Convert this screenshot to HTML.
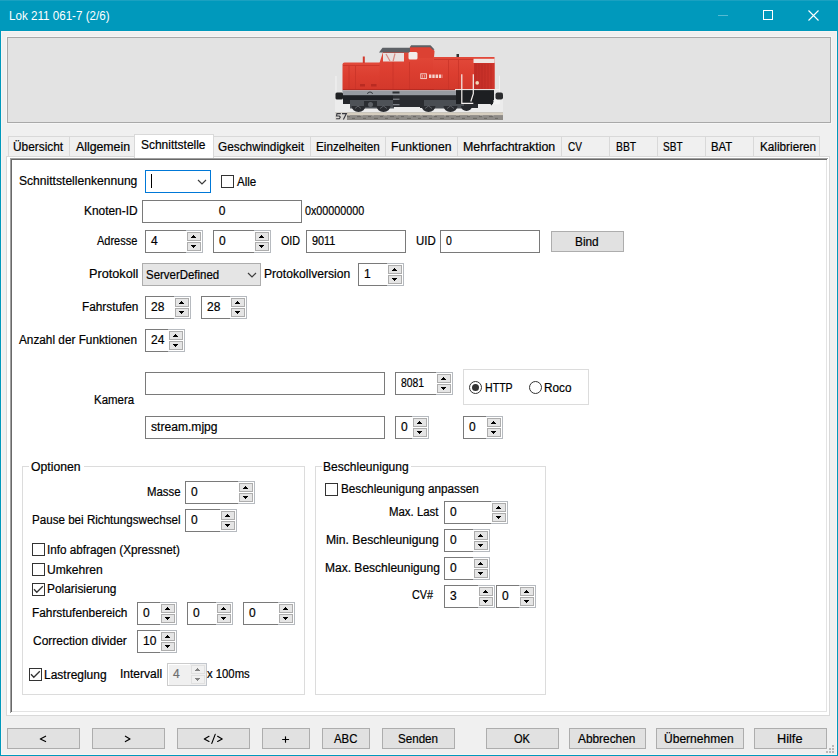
<!DOCTYPE html>
<html><head><meta charset="utf-8"><style>
html,body{margin:0;padding:0;width:838px;height:756px;overflow:hidden;background:#f0f0f0}
#w div,#w span,#w svg{position:absolute}
.t{-webkit-text-stroke:0.2px currentColor;font-family:"Liberation Sans", sans-serif;font-size:12px;line-height:14px;white-space:pre;color:#000}
</style></head><body><div id="w" style="position:absolute;left:0;top:0;width:838px;height:756px;background:#f0f0f0">

<div style="left:0px;top:0px;width:838px;height:31px;background:#0099bc"></div>
<div style="left:0px;top:0px;width:838px;height:1px;background:#1aa1c1"></div>
<div style="left:0px;top:31px;width:1px;height:725px;background:#0099bc"></div>
<div style="left:837px;top:31px;width:1px;height:725px;background:#0099bc"></div>
<div style="left:0px;top:755px;width:838px;height:1px;background:#0099bc"></div>
<div style="left:1px;top:31px;width:836px;height:1px;background:#f7f4f3"></div>
<div style="left:1px;top:31px;width:1px;height:724px;background:#f7f4f3"></div>
<div style="left:836px;top:31px;width:1px;height:724px;background:#f7f4f3"></div>
<div style="left:1px;top:754px;width:836px;height:1px;background:#f7f4f3"></div>
<span class="t" style="left:8.73px;top:9px;font-size:12px;color:#fff;transform:scaleX(0.9686);transform-origin:0 0;-webkit-text-stroke:0">Lok 211 061-7 (2/6)</span>
<div style="left:718px;top:15px;width:10px;height:1px;background:#55bad2"></div>
<div style="left:763px;top:10px;width:10px;height:10px;border:1px solid #fff;box-sizing:border-box"></div>
<svg style="left:808px;top:10px" width="12" height="12"><path d="M0.5 0.5 L10.5 10.5 M10.5 0.5 L0.5 10.5" stroke="#fff" stroke-width="1.1"/></svg>
<div style="left:6px;top:36px;width:826px;height:88px;background:#f6f6f6"></div>
<div style="left:7px;top:37px;width:824px;height:86px;background:#e3e3e3;border:1px solid #a9a9a9;box-sizing:border-box"></div>
<svg style="left:333px;top:42px" width="174" height="82" viewBox="333 42 174 82">
<defs>
<linearGradient id="rg" x1="0" y1="0" x2="0" y2="1"><stop offset="0" stop-color="#e2493a"/><stop offset="0.5" stop-color="#dc3e30"/><stop offset="1" stop-color="#d3382b"/></linearGradient>
<linearGradient id="ng" x1="0" y1="0" x2="1" y2="0"><stop offset="0" stop-color="#c22d26"/><stop offset="1" stop-color="#cf352c"/></linearGradient>
</defs>
<!-- light background under loco -->
<rect x="335" y="99" width="168" height="14" fill="#ececec"/>
<!-- track -->
<rect x="335" y="112.5" width="168" height="7.5" fill="#8e8b87"/>
<rect x="335" y="112.5" width="168" height="2.6" fill="#d6cebf"/>
<path d="M347 116.6h3M352 118.4h3M357 116.6h4M363 118.4h3M368 116.6h3M374 118.4h4M380 116.6h3M385 118.4h3M390 116.6h4M396 118.4h3M401 116.6h3M407 118.4h4M413 116.6h3M418 118.4h3M423 116.6h4M429 118.4h3M434 116.6h3M440 118.4h4M446 116.6h3M451 118.4h3M456 116.6h4M462 118.4h3M467 116.6h3M473 118.4h4M479 116.6h3M484 118.4h3M489 116.6h4M495 118.4h3" stroke="#6a6763" stroke-width="1"/>
<path d="M348 115.6h2M360 115.6h3M372 115.6h2M384 115.6h3M396 115.6h2M408 115.6h3M420 115.6h2M432 115.6h3M444 115.6h2M456 115.6h3M468 115.6h2M480 115.6h3M492 115.6h2" stroke="#aaa69f" stroke-width="1"/>
<rect x="335" y="112.5" width="12" height="7.5" fill="#d9d7d3"/>
<path d="M340.8 113.6h-3.8l-.5 2.4h2.8l1 1.1-1 1.6h-3.2M342 113.6h4.4l-3 5.8" stroke="#3a3a40" stroke-width="1.15" fill="none"/>
<!-- underframe base band -->
<rect x="343" y="95" width="151" height="5.5" fill="#1f2125"/>
<path d="M343 100 H351 V104 H343 Z" fill="#25272b"/>
<!-- left bogie -->
<path d="M350 100 H394 V108.5 H350 Z" fill="#4e5257"/>
<path d="M351.5 106 a7 6 0 0 0 14 0z" fill="#2a2c30"/><path d="M355 108.5l3-2.5 3 2.5" stroke="#6b6f74" stroke-width="0.8" fill="none"/>
<path d="M376.5 106 a7 6 0 0 0 14 0z" fill="#2a2c30"/><path d="M380 108.5l3.5-2.5 3.5 2.5" stroke="#6b6f74" stroke-width="0.8" fill="none"/>
<path d="M364 101 h13 v6 h-13z" fill="#2b2e32"/>
<circle cx="370.5" cy="104.5" r="2.5" fill="#5d6166"/>
<!-- middle: steps + tank -->
<path d="M393 95 H420 V107 H393 Z" fill="#2a2c30"/>
<rect x="393" y="98.6" width="6.5" height="1.3" fill="#7d8187"/>
<rect x="393" y="104" width="6.5" height="1.3" fill="#7d8187"/>
<!-- right bogie -->
<path d="M420 95 H482 V104 H478 V108 H420 Z" fill="#2a2c30"/>
<path d="M424 100 H464 V108.5 H424 Z" fill="#4a4e53"/>
<path d="M421.5 106 a7 6 0 0 0 14 0z" fill="#2a2c30"/><path d="M425 108.5l3.5-2.5 3.5 2.5" stroke="#6b6f74" stroke-width="0.8" fill="none"/>
<path d="M443.5 106 a7 6 0 0 0 14 0z" fill="#2a2c30"/><path d="M447 108.5l3.5-2.5 3.5 2.5" stroke="#6b6f74" stroke-width="0.8" fill="none"/>
<path d="M461 106 a5.5 5 0 0 0 11 0z" fill="#26282c"/>
<!-- front frame -->
<path d="M456 89.5 H494 V104 H456 Z" fill="#1d1f22"/>
<rect x="493" y="100" width="6" height="4.4" fill="#f3f3f3"/>
<path d="M491 98 q4 3 0 7" stroke="#1d1f22" stroke-width="1.2" fill="none"/>
<!-- gray frame -->
<rect x="342.5" y="90" width="113.5" height="5.2" fill="#979ba1"/>
<rect x="342.5" y="90" width="113.5" height="1" fill="#b3b6ba"/>
<rect x="392.5" y="91.5" width="7" height="2" fill="#2d3034"/>
<path d="M367.5 94 a2.5 2 0 0 1 5 0" stroke="#3a3d42" stroke-width="1" fill="none"/>
<!-- buffers -->
<path d="M336 76v16" stroke="#f4f4f4" stroke-width="1"/>
<path d="M499.4 75.7v28.3" stroke="#f4f4f4" stroke-width="0.9"/>
<rect x="335.5" y="92.5" width="7.5" height="7" rx="1.5" fill="#1f2022"/>
<rect x="495.5" y="92.5" width="7.5" height="7" rx="2" fill="#2a2b2d"/>
<!-- red body: short hood -->
<path d="M342.5 64.5 Q342.5 62.5 344.5 62.5 H382 V90 H342.5 Z" fill="url(#rg)"/>
<path d="M349 66v23M355.5 66v23M343 65.5h38" stroke="#c93328" stroke-width="0.8"/>
<rect x="360" y="84" width="5" height="2.5" fill="#b92b22"/>
<rect x="371" y="84" width="5.5" height="2.5" fill="#b92b22"/>
<rect x="362.8" y="56.5" width="2" height="6.5" fill="#d2392d"/>
<!-- cab -->
<path d="M379.5 63 L383 52 H434 V90 H379.5 Z" fill="url(#rg)"/>
<path d="M409 53 L410 46.5 H431 L434.5 51 L434 58 H409 Z" fill="#dc4133"/>
<path d="M379 52.5 L382.5 47.8 H410 V52.5 Z" fill="#5d6166"/>
<path d="M410 47.5 L411 45.2 H430.5 L434.5 49.5 L433 50 L430 47.3 H411.5 Z" fill="#5d6166"/>
<rect x="383" y="53" width="21" height="8.5" fill="#e9e1e0"/>
<path d="M386 54l4 7M395 53.5l-2 8" stroke="#d98a82" stroke-width="1.2"/>
<rect x="408.5" y="52" width="9" height="7.5" rx="1.5" fill="#f3ecea"/>
<path d="M409.5 62v28M393 62v28" stroke="#c93328" stroke-width="0.8"/>
<!-- long hood -->
<rect x="433" y="57" width="61.5" height="32.5" fill="url(#rg)"/>
<path d="M448.5 60v29M458.5 60v29M434 59.5h40" stroke="#c93328" stroke-width="0.8"/>
<rect x="474" y="62.5" width="20.5" height="27" fill="url(#ng)"/>
<path d="M476 64v25M479 64v25M482 64v25M485 64v25M488 64v25M491 64v25" stroke="#b52a23" stroke-width="0.6"/>
<rect x="473.5" y="58.8" width="21" height="4.2" fill="#efe6e3"/>
<rect x="456.5" y="54" width="2.5" height="3" fill="#333"/>
<circle cx="477.2" cy="82.9" r="1.8" fill="#f2d9b8"/>
<path d="M343 89.6h113" stroke="#b42a22" stroke-width="1"/>
<!-- DB Cargo -->
<rect x="420.8" y="73.8" width="5.6" height="4.8" fill="none" stroke="#f5dcd6" stroke-width="0.9"/>
<path d="M422.6 74.8v3M424.6 74.8v3" stroke="#f5dcd6" stroke-width="0.6"/>
<path d="M429 76.2h13.5" stroke="#f4d3cc" stroke-width="3.6" stroke-dasharray="2.4 0.9"/>
<path d="M455 89.6 H500" stroke="#f2f0ee" stroke-width="1"/>
<!-- railings -->
<path d="M461.8 74.3 V103.3 H473.3 M473.3 74.3 V93.6 L470.8 101.5" stroke="#f4f0ee" stroke-width="1.2" fill="none"/>
</svg>

<div style="left:6px;top:156px;width:824px;height:560px;background:#fff;border:1px solid #d9d9d9;box-sizing:border-box"></div>
<div style="left:8px;top:136px;width:62px;height:21px;background:#f0f0f0;border:1px solid #d9d9d9;box-sizing:border-box"></div>
<div style="left:69px;top:136px;width:66px;height:21px;background:#f0f0f0;border:1px solid #d9d9d9;box-sizing:border-box"></div>
<div style="left:213px;top:136px;width:98px;height:21px;background:#f0f0f0;border:1px solid #d9d9d9;box-sizing:border-box"></div>
<div style="left:310px;top:136px;width:76px;height:21px;background:#f0f0f0;border:1px solid #d9d9d9;box-sizing:border-box"></div>
<div style="left:385px;top:136px;width:73px;height:21px;background:#f0f0f0;border:1px solid #d9d9d9;box-sizing:border-box"></div>
<div style="left:457px;top:136px;width:105px;height:21px;background:#f0f0f0;border:1px solid #d9d9d9;box-sizing:border-box"></div>
<div style="left:561px;top:136px;width:49px;height:21px;background:#f0f0f0;border:1px solid #d9d9d9;box-sizing:border-box"></div>
<div style="left:609px;top:136px;width:49px;height:21px;background:#f0f0f0;border:1px solid #d9d9d9;box-sizing:border-box"></div>
<div style="left:657px;top:136px;width:49px;height:21px;background:#f0f0f0;border:1px solid #d9d9d9;box-sizing:border-box"></div>
<div style="left:705px;top:136px;width:49px;height:21px;background:#f0f0f0;border:1px solid #d9d9d9;box-sizing:border-box"></div>
<div style="left:753px;top:136px;width:67px;height:21px;background:#f0f0f0;border:1px solid #d9d9d9;box-sizing:border-box"></div>
<span class="t" style="left:13.41px;top:140px;font-size:12px;color:#000;transform:scaleX(0.9880);transform-origin:0 0;">Übersicht</span>
<span class="t" style="left:76.10px;top:140px;font-size:12px;color:#000;transform:scaleX(1.0250);transform-origin:0 0;">Allgemein</span>
<span class="t" style="left:218.40px;top:140px;font-size:12px;color:#000;transform:scaleX(0.9841);transform-origin:0 0;">Geschwindigkeit</span>
<span class="t" style="left:316.32px;top:140px;font-size:12px;color:#000;transform:scaleX(0.9766);transform-origin:0 0;">Einzelheiten</span>
<span class="t" style="left:391.28px;top:140px;font-size:12px;color:#000;transform:scaleX(1.0190);transform-origin:0 0;">Funktionen</span>
<span class="t" style="left:463.47px;top:140px;font-size:12px;color:#000;transform:scaleX(1.0318);transform-origin:0 0;">Mehrfachtraktion</span>
<span class="t" style="left:568.40px;top:140px;font-size:12px;color:#000;transform:scaleX(0.8353);transform-origin:0 0;">CV</span>
<span class="t" style="left:615.64px;top:140px;font-size:12px;color:#000;transform:scaleX(0.8636);transform-origin:0 0;">BBT</span>
<span class="t" style="left:663.06px;top:140px;font-size:12px;color:#000;transform:scaleX(0.8409);transform-origin:0 0;">SBT</span>
<span class="t" style="left:711.25px;top:140px;font-size:12px;color:#000;transform:scaleX(0.9476);transform-origin:0 0;">BAT</span>
<span class="t" style="left:759.52px;top:140px;font-size:12px;color:#000;transform:scaleX(0.9786);transform-origin:0 0;">Kalibrieren</span>
<div style="left:134px;top:134px;width:80px;height:24px;background:#fff;border:1px solid #d9d9d9;border-bottom:none;box-sizing:border-box"></div>
<span class="t" style="left:140.70px;top:138px;font-size:12px;color:#000;transform:scaleX(0.9969);transform-origin:0 0;">Schnittstelle</span>
<div style="left:10px;top:158px;width:818px;height:555px;background:#fff"></div>
<div style="left:10px;top:158px;width:818px;height:1px;background:#a0a0a0"></div>
<div style="left:10px;top:158px;width:1px;height:555px;background:#a0a0a0"></div>
<div style="left:11px;top:159px;width:816px;height:1px;background:#696969"></div>
<div style="left:11px;top:159px;width:1px;height:553px;background:#696969"></div>
<div style="left:12px;top:711px;width:815px;height:1px;background:#e3e3e3"></div>
<div style="left:826px;top:160px;width:1px;height:552px;background:#e3e3e3"></div>
<span class="t" style="left:19.39px;top:174px;font-size:12px;color:#000;transform:scaleX(1.0078);transform-origin:0 0;">Schnittstellenkennung</span>
<div style="left:145px;top:170px;width:66px;height:23px;background:#fff;border:1px solid #0078d7;box-sizing:border-box"></div>
<div style="left:151px;top:174px;width:1px;height:14px;background:#000"></div>
<svg style="left:197.3px;top:178.8px" width="11" height="7"><polyline points="1,1 5,5 9,1" fill="none" stroke="#3c3c3c" stroke-width="1.15"/></svg>
<div style="left:221px;top:175px;width:13px;height:13px;background:#fff;border:1px solid #333;box-sizing:border-box"></div>
<span class="t" style="left:237.40px;top:175px;font-size:12px;color:#000;transform:scaleX(0.9650);transform-origin:0 0;">Alle</span>
<span class="t" style="left:83.71px;top:204px;font-size:12px;color:#000;transform:scaleX(0.9925);transform-origin:0 0;">Knoten-ID</span>
<div style="left:142px;top:200px;width:160px;height:23px;background:#fff;border:1px solid #7a7a7a;box-sizing:border-box"></div>
<span class="t" style="left:142px;top:204px;width:160px;font-size:12px;color:#000;text-align:center;">0</span>
<span class="t" style="left:304.60px;top:204px;font-size:12px;color:#000;transform:scaleX(0.8955);transform-origin:0 0;">0x00000000</span>
<span class="t" style="left:97.30px;top:234px;font-size:12px;color:#000;transform:scaleX(0.9159);transform-origin:0 0;">Adresse</span>
<div style="left:145px;top:230px;width:58px;height:23px;background:#fff"></div>
<div style="left:145px;top:230px;width:41px;height:23px;border:1px solid #7a7a7a;border-right:none;box-sizing:border-box"></div>
<div style="left:186px;top:230px;width:17px;height:23px;border:1px solid #b6babf;border-left:none;box-sizing:border-box;background:#fff"></div>
<div style="left:187px;top:232px;width:14px;height:9px;border:1px solid #adadad;box-sizing:border-box;background:#e5e5e5"></div>
<div style="left:187px;top:242px;width:14px;height:9px;border:1px solid #adadad;box-sizing:border-box;background:#e5e5e5"></div>
<div style="left:193px;top:235px;width:1px;height:1px;background:#000"></div>
<div style="left:192px;top:236px;width:3px;height:1px;background:#000"></div>
<div style="left:191px;top:237px;width:5px;height:1px;background:#000"></div>
<div style="left:191px;top:245px;width:5px;height:1px;background:#000"></div>
<div style="left:192px;top:246px;width:3px;height:1px;background:#000"></div>
<div style="left:193px;top:247px;width:1px;height:1px;background:#000"></div>
<span class="t" style="left:151px;top:234px;font-size:12px;color:#000;">4</span>
<div style="left:213px;top:230px;width:58px;height:23px;background:#fff"></div>
<div style="left:213px;top:230px;width:41px;height:23px;border:1px solid #7a7a7a;border-right:none;box-sizing:border-box"></div>
<div style="left:254px;top:230px;width:17px;height:23px;border:1px solid #b6babf;border-left:none;box-sizing:border-box;background:#fff"></div>
<div style="left:255px;top:232px;width:14px;height:9px;border:1px solid #adadad;box-sizing:border-box;background:#e5e5e5"></div>
<div style="left:255px;top:242px;width:14px;height:9px;border:1px solid #adadad;box-sizing:border-box;background:#e5e5e5"></div>
<div style="left:261px;top:235px;width:1px;height:1px;background:#000"></div>
<div style="left:260px;top:236px;width:3px;height:1px;background:#000"></div>
<div style="left:259px;top:237px;width:5px;height:1px;background:#000"></div>
<div style="left:259px;top:245px;width:5px;height:1px;background:#000"></div>
<div style="left:260px;top:246px;width:3px;height:1px;background:#000"></div>
<div style="left:261px;top:247px;width:1px;height:1px;background:#000"></div>
<span class="t" style="left:219px;top:234px;font-size:12px;color:#000;">0</span>
<span class="t" style="left:281.40px;top:234px;font-size:12px;color:#000;transform:scaleX(0.8952);transform-origin:0 0;">OID</span>
<div style="left:306px;top:230px;width:100px;height:23px;background:#fff;border:1px solid #7a7a7a;box-sizing:border-box"></div>
<span class="t" style="left:311.80px;top:234px;font-size:12px;color:#000;transform:scaleX(0.9038);transform-origin:0 0;">9011</span>
<span class="t" style="left:415.55px;top:234px;font-size:12px;color:#000;transform:scaleX(0.9526);transform-origin:0 0;">UID</span>
<div style="left:440px;top:230px;width:100px;height:23px;background:#fff;border:1px solid #7a7a7a;box-sizing:border-box"></div>
<span class="t" style="left:446.00px;top:234px;font-size:12px;color:#000;transform:scaleX(0.8714);transform-origin:0 0;">0</span>
<div style="left:551px;top:231px;width:73px;height:21px;background:#e1e1e1;border:1px solid #adadad;box-sizing:border-box"></div>
<span class="t" style="left:574.61px;top:235px;font-size:12px;color:#000;transform:scaleX(0.9870);transform-origin:0 0;">Bind</span>
<span class="t" style="left:89.14px;top:267px;font-size:12px;color:#000;transform:scaleX(1.0578);transform-origin:0 0;">Protokoll</span>
<div style="left:142px;top:263px;width:119px;height:23px;background:#e5e5e5;border:1px solid #adadad;box-sizing:border-box"></div>
<span class="t" style="left:145.85px;top:268px;font-size:12px;color:#000;transform:scaleX(0.9533);transform-origin:0 0;">ServerDefined</span>
<svg style="left:247px;top:271.5px" width="11" height="7"><polyline points="1,1 5,5 9,1" fill="none" stroke="#3c3c3c" stroke-width="1.15"/></svg>
<span class="t" style="left:264.29px;top:267px;font-size:12px;color:#000;transform:scaleX(1.0095);transform-origin:0 0;">Protokollversion</span>
<div style="left:358px;top:263px;width:46px;height:23px;background:#fff"></div>
<div style="left:358px;top:263px;width:29px;height:23px;border:1px solid #7a7a7a;border-right:none;box-sizing:border-box"></div>
<div style="left:387px;top:263px;width:17px;height:23px;border:1px solid #b6babf;border-left:none;box-sizing:border-box;background:#fff"></div>
<div style="left:388px;top:265px;width:14px;height:9px;border:1px solid #adadad;box-sizing:border-box;background:#e5e5e5"></div>
<div style="left:388px;top:275px;width:14px;height:9px;border:1px solid #adadad;box-sizing:border-box;background:#e5e5e5"></div>
<div style="left:394px;top:268px;width:1px;height:1px;background:#000"></div>
<div style="left:393px;top:269px;width:3px;height:1px;background:#000"></div>
<div style="left:392px;top:270px;width:5px;height:1px;background:#000"></div>
<div style="left:392px;top:278px;width:5px;height:1px;background:#000"></div>
<div style="left:393px;top:279px;width:3px;height:1px;background:#000"></div>
<div style="left:394px;top:280px;width:1px;height:1px;background:#000"></div>
<span class="t" style="left:364px;top:267px;font-size:12px;color:#000;">1</span>
<span class="t" style="left:81.52px;top:300px;font-size:12px;color:#000;transform:scaleX(0.9839);transform-origin:0 0;">Fahrstufen</span>
<div style="left:145px;top:296px;width:46px;height:23px;background:#fff"></div>
<div style="left:145px;top:296px;width:29px;height:23px;border:1px solid #7a7a7a;border-right:none;box-sizing:border-box"></div>
<div style="left:174px;top:296px;width:17px;height:23px;border:1px solid #b6babf;border-left:none;box-sizing:border-box;background:#fff"></div>
<div style="left:175px;top:298px;width:14px;height:9px;border:1px solid #adadad;box-sizing:border-box;background:#e5e5e5"></div>
<div style="left:175px;top:308px;width:14px;height:9px;border:1px solid #adadad;box-sizing:border-box;background:#e5e5e5"></div>
<div style="left:181px;top:301px;width:1px;height:1px;background:#000"></div>
<div style="left:180px;top:302px;width:3px;height:1px;background:#000"></div>
<div style="left:179px;top:303px;width:5px;height:1px;background:#000"></div>
<div style="left:179px;top:311px;width:5px;height:1px;background:#000"></div>
<div style="left:180px;top:312px;width:3px;height:1px;background:#000"></div>
<div style="left:181px;top:313px;width:1px;height:1px;background:#000"></div>
<span class="t" style="left:151px;top:300px;font-size:12px;color:#000;">28</span>
<div style="left:201px;top:296px;width:46px;height:23px;background:#fff"></div>
<div style="left:201px;top:296px;width:29px;height:23px;border:1px solid #7a7a7a;border-right:none;box-sizing:border-box"></div>
<div style="left:230px;top:296px;width:17px;height:23px;border:1px solid #b6babf;border-left:none;box-sizing:border-box;background:#fff"></div>
<div style="left:231px;top:298px;width:14px;height:9px;border:1px solid #adadad;box-sizing:border-box;background:#e5e5e5"></div>
<div style="left:231px;top:308px;width:14px;height:9px;border:1px solid #adadad;box-sizing:border-box;background:#e5e5e5"></div>
<div style="left:237px;top:301px;width:1px;height:1px;background:#000"></div>
<div style="left:236px;top:302px;width:3px;height:1px;background:#000"></div>
<div style="left:235px;top:303px;width:5px;height:1px;background:#000"></div>
<div style="left:235px;top:311px;width:5px;height:1px;background:#000"></div>
<div style="left:236px;top:312px;width:3px;height:1px;background:#000"></div>
<div style="left:237px;top:313px;width:1px;height:1px;background:#000"></div>
<span class="t" style="left:207px;top:300px;font-size:12px;color:#000;">28</span>
<span class="t" style="left:19.10px;top:333px;font-size:12px;color:#000;transform:scaleX(0.9825);transform-origin:0 0;">Anzahl der Funktionen</span>
<div style="left:145px;top:329px;width:40px;height:23px;background:#fff"></div>
<div style="left:145px;top:329px;width:23px;height:23px;border:1px solid #7a7a7a;border-right:none;box-sizing:border-box"></div>
<div style="left:168px;top:329px;width:17px;height:23px;border:1px solid #b6babf;border-left:none;box-sizing:border-box;background:#fff"></div>
<div style="left:169px;top:331px;width:14px;height:9px;border:1px solid #adadad;box-sizing:border-box;background:#e5e5e5"></div>
<div style="left:169px;top:341px;width:14px;height:9px;border:1px solid #adadad;box-sizing:border-box;background:#e5e5e5"></div>
<div style="left:175px;top:334px;width:1px;height:1px;background:#000"></div>
<div style="left:174px;top:335px;width:3px;height:1px;background:#000"></div>
<div style="left:173px;top:336px;width:5px;height:1px;background:#000"></div>
<div style="left:173px;top:344px;width:5px;height:1px;background:#000"></div>
<div style="left:174px;top:345px;width:3px;height:1px;background:#000"></div>
<div style="left:175px;top:346px;width:1px;height:1px;background:#000"></div>
<span class="t" style="left:151px;top:333px;font-size:12px;color:#000;">24</span>
<span class="t" style="left:94.35px;top:393px;font-size:12px;color:#000;transform:scaleX(0.9537);transform-origin:0 0;">Kamera</span>
<div style="left:145px;top:372px;width:240px;height:23px;background:#fff;border:1px solid #7a7a7a;box-sizing:border-box"></div>
<div style="left:395px;top:372px;width:58px;height:23px;background:#fff"></div>
<div style="left:395px;top:372px;width:41px;height:23px;border:1px solid #7a7a7a;border-right:none;box-sizing:border-box"></div>
<div style="left:436px;top:372px;width:17px;height:23px;border:1px solid #b6babf;border-left:none;box-sizing:border-box;background:#fff"></div>
<div style="left:437px;top:374px;width:14px;height:9px;border:1px solid #adadad;box-sizing:border-box;background:#e5e5e5"></div>
<div style="left:437px;top:384px;width:14px;height:9px;border:1px solid #adadad;box-sizing:border-box;background:#e5e5e5"></div>
<div style="left:443px;top:377px;width:1px;height:1px;background:#000"></div>
<div style="left:442px;top:378px;width:3px;height:1px;background:#000"></div>
<div style="left:441px;top:379px;width:5px;height:1px;background:#000"></div>
<div style="left:441px;top:387px;width:5px;height:1px;background:#000"></div>
<div style="left:442px;top:388px;width:3px;height:1px;background:#000"></div>
<div style="left:443px;top:389px;width:1px;height:1px;background:#000"></div>
<span class="t" style="left:401.00px;top:376px;font-size:12px;color:#000;transform:scaleX(0.8630);transform-origin:0 0;">8081</span>
<div style="left:463px;top:369px;width:126px;height:36px;border:1px solid #dcdcdc;box-sizing:border-box"></div>
<svg style="left:468px;top:380px" width="15" height="15"><circle cx="7.5" cy="7.5" r="6" fill="#fff" stroke="#333" stroke-width="1"/><circle cx="7.5" cy="7.5" r="3.5" fill="#333"/></svg>
<span class="t" style="left:484.72px;top:381px;font-size:12px;color:#000;transform:scaleX(0.8833);transform-origin:0 0;">HTTP</span>
<svg style="left:528px;top:380px" width="15" height="15"><circle cx="7.5" cy="7.5" r="6" fill="#fff" stroke="#333" stroke-width="1"/></svg>
<span class="t" style="left:544.32px;top:381px;font-size:12px;color:#000;transform:scaleX(0.9815);transform-origin:0 0;">Roco</span>
<div style="left:145px;top:416px;width:240px;height:23px;background:#fff;border:1px solid #7a7a7a;box-sizing:border-box"></div>
<span class="t" style="left:151.00px;top:420px;font-size:12px;color:#000;transform:scaleX(1.0076);transform-origin:0 0;">stream.mjpg</span>
<div style="left:395px;top:416px;width:34px;height:23px;background:#fff"></div>
<div style="left:395px;top:416px;width:17px;height:23px;border:1px solid #7a7a7a;border-right:none;box-sizing:border-box"></div>
<div style="left:412px;top:416px;width:17px;height:23px;border:1px solid #b6babf;border-left:none;box-sizing:border-box;background:#fff"></div>
<div style="left:413px;top:418px;width:14px;height:9px;border:1px solid #adadad;box-sizing:border-box;background:#e5e5e5"></div>
<div style="left:413px;top:428px;width:14px;height:9px;border:1px solid #adadad;box-sizing:border-box;background:#e5e5e5"></div>
<div style="left:419px;top:421px;width:1px;height:1px;background:#000"></div>
<div style="left:418px;top:422px;width:3px;height:1px;background:#000"></div>
<div style="left:417px;top:423px;width:5px;height:1px;background:#000"></div>
<div style="left:417px;top:431px;width:5px;height:1px;background:#000"></div>
<div style="left:418px;top:432px;width:3px;height:1px;background:#000"></div>
<div style="left:419px;top:433px;width:1px;height:1px;background:#000"></div>
<span class="t" style="left:401px;top:420px;font-size:12px;color:#000;">0</span>
<div style="left:463px;top:416px;width:40px;height:23px;background:#fff"></div>
<div style="left:463px;top:416px;width:23px;height:23px;border:1px solid #7a7a7a;border-right:none;box-sizing:border-box"></div>
<div style="left:486px;top:416px;width:17px;height:23px;border:1px solid #b6babf;border-left:none;box-sizing:border-box;background:#fff"></div>
<div style="left:487px;top:418px;width:14px;height:9px;border:1px solid #adadad;box-sizing:border-box;background:#e5e5e5"></div>
<div style="left:487px;top:428px;width:14px;height:9px;border:1px solid #adadad;box-sizing:border-box;background:#e5e5e5"></div>
<div style="left:493px;top:421px;width:1px;height:1px;background:#000"></div>
<div style="left:492px;top:422px;width:3px;height:1px;background:#000"></div>
<div style="left:491px;top:423px;width:5px;height:1px;background:#000"></div>
<div style="left:491px;top:431px;width:5px;height:1px;background:#000"></div>
<div style="left:492px;top:432px;width:3px;height:1px;background:#000"></div>
<div style="left:493px;top:433px;width:1px;height:1px;background:#000"></div>
<span class="t" style="left:469px;top:420px;font-size:12px;color:#000;">0</span>
<div style="left:22px;top:466px;width:283px;height:229px;border:1px solid #dcdcdc;box-sizing:border-box"></div>
<div style="left:29px;top:460px;width:55px;height:13px;background:#fff"></div>
<span class="t" style="left:31.40px;top:460px;font-size:12px;color:#000;transform:scaleX(1.0167);transform-origin:0 0;">Optionen</span>
<span class="t" style="left:146.55px;top:485px;font-size:12px;color:#000;transform:scaleX(0.9500);transform-origin:0 0;">Masse</span>
<div style="left:185px;top:481px;width:70px;height:23px;background:#fff"></div>
<div style="left:185px;top:481px;width:53px;height:23px;border:1px solid #7a7a7a;border-right:none;box-sizing:border-box"></div>
<div style="left:238px;top:481px;width:17px;height:23px;border:1px solid #b6babf;border-left:none;box-sizing:border-box;background:#fff"></div>
<div style="left:239px;top:483px;width:14px;height:9px;border:1px solid #adadad;box-sizing:border-box;background:#e5e5e5"></div>
<div style="left:239px;top:493px;width:14px;height:9px;border:1px solid #adadad;box-sizing:border-box;background:#e5e5e5"></div>
<div style="left:245px;top:486px;width:1px;height:1px;background:#000"></div>
<div style="left:244px;top:487px;width:3px;height:1px;background:#000"></div>
<div style="left:243px;top:488px;width:5px;height:1px;background:#000"></div>
<div style="left:243px;top:496px;width:5px;height:1px;background:#000"></div>
<div style="left:244px;top:497px;width:3px;height:1px;background:#000"></div>
<div style="left:245px;top:498px;width:1px;height:1px;background:#000"></div>
<span class="t" style="left:191px;top:485px;font-size:12px;color:#000;">0</span>
<span class="t" style="left:31.73px;top:513px;font-size:12px;color:#000;transform:scaleX(0.9678);transform-origin:0 0;">Pause bei Richtungswechsel</span>
<div style="left:185px;top:509px;width:52px;height:23px;background:#fff"></div>
<div style="left:185px;top:509px;width:35px;height:23px;border:1px solid #7a7a7a;border-right:none;box-sizing:border-box"></div>
<div style="left:220px;top:509px;width:17px;height:23px;border:1px solid #b6babf;border-left:none;box-sizing:border-box;background:#fff"></div>
<div style="left:221px;top:511px;width:14px;height:9px;border:1px solid #adadad;box-sizing:border-box;background:#e5e5e5"></div>
<div style="left:221px;top:521px;width:14px;height:9px;border:1px solid #adadad;box-sizing:border-box;background:#e5e5e5"></div>
<div style="left:227px;top:514px;width:1px;height:1px;background:#000"></div>
<div style="left:226px;top:515px;width:3px;height:1px;background:#000"></div>
<div style="left:225px;top:516px;width:5px;height:1px;background:#000"></div>
<div style="left:225px;top:524px;width:5px;height:1px;background:#000"></div>
<div style="left:226px;top:525px;width:3px;height:1px;background:#000"></div>
<div style="left:227px;top:526px;width:1px;height:1px;background:#000"></div>
<span class="t" style="left:191px;top:513px;font-size:12px;color:#000;">0</span>
<div style="left:32px;top:543px;width:13px;height:13px;background:#fff;border:1px solid #333;box-sizing:border-box"></div>
<span class="t" style="left:47.32px;top:543px;font-size:12px;color:#000;transform:scaleX(0.9770);transform-origin:0 0;">Info abfragen (Xpressnet)</span>
<div style="left:32px;top:563px;width:13px;height:13px;background:#fff;border:1px solid #333;box-sizing:border-box"></div>
<span class="t" style="left:47.29px;top:563px;font-size:12px;color:#000;transform:scaleX(1.0074);transform-origin:0 0;">Umkehren</span>
<div style="left:32px;top:583px;width:13px;height:13px;background:#fff;border:1px solid #333;box-sizing:border-box"></div>
<svg style="left:32px;top:583px" width="13" height="13"><polyline points="2,6.2 4.8,9.3 10.8,3.3" fill="none" stroke="#333" stroke-width="1.3"/></svg>
<span class="t" style="left:47.31px;top:582px;font-size:12px;color:#000;transform:scaleX(0.9913);transform-origin:0 0;">Polarisierung</span>
<span class="t" style="left:31.61px;top:606px;font-size:12px;color:#000;transform:scaleX(0.9863);transform-origin:0 0;">Fahrstufenbereich</span>
<div style="left:137px;top:602px;width:40px;height:23px;background:#fff"></div>
<div style="left:137px;top:602px;width:23px;height:23px;border:1px solid #7a7a7a;border-right:none;box-sizing:border-box"></div>
<div style="left:160px;top:602px;width:17px;height:23px;border:1px solid #b6babf;border-left:none;box-sizing:border-box;background:#fff"></div>
<div style="left:161px;top:604px;width:14px;height:9px;border:1px solid #adadad;box-sizing:border-box;background:#e5e5e5"></div>
<div style="left:161px;top:614px;width:14px;height:9px;border:1px solid #adadad;box-sizing:border-box;background:#e5e5e5"></div>
<div style="left:167px;top:607px;width:1px;height:1px;background:#000"></div>
<div style="left:166px;top:608px;width:3px;height:1px;background:#000"></div>
<div style="left:165px;top:609px;width:5px;height:1px;background:#000"></div>
<div style="left:165px;top:617px;width:5px;height:1px;background:#000"></div>
<div style="left:166px;top:618px;width:3px;height:1px;background:#000"></div>
<div style="left:167px;top:619px;width:1px;height:1px;background:#000"></div>
<span class="t" style="left:143px;top:606px;font-size:12px;color:#000;">0</span>
<div style="left:187px;top:602px;width:46px;height:23px;background:#fff"></div>
<div style="left:187px;top:602px;width:29px;height:23px;border:1px solid #7a7a7a;border-right:none;box-sizing:border-box"></div>
<div style="left:216px;top:602px;width:17px;height:23px;border:1px solid #b6babf;border-left:none;box-sizing:border-box;background:#fff"></div>
<div style="left:217px;top:604px;width:14px;height:9px;border:1px solid #adadad;box-sizing:border-box;background:#e5e5e5"></div>
<div style="left:217px;top:614px;width:14px;height:9px;border:1px solid #adadad;box-sizing:border-box;background:#e5e5e5"></div>
<div style="left:223px;top:607px;width:1px;height:1px;background:#000"></div>
<div style="left:222px;top:608px;width:3px;height:1px;background:#000"></div>
<div style="left:221px;top:609px;width:5px;height:1px;background:#000"></div>
<div style="left:221px;top:617px;width:5px;height:1px;background:#000"></div>
<div style="left:222px;top:618px;width:3px;height:1px;background:#000"></div>
<div style="left:223px;top:619px;width:1px;height:1px;background:#000"></div>
<span class="t" style="left:193px;top:606px;font-size:12px;color:#000;">0</span>
<div style="left:243px;top:602px;width:52px;height:23px;background:#fff"></div>
<div style="left:243px;top:602px;width:35px;height:23px;border:1px solid #7a7a7a;border-right:none;box-sizing:border-box"></div>
<div style="left:278px;top:602px;width:17px;height:23px;border:1px solid #b6babf;border-left:none;box-sizing:border-box;background:#fff"></div>
<div style="left:279px;top:604px;width:14px;height:9px;border:1px solid #adadad;box-sizing:border-box;background:#e5e5e5"></div>
<div style="left:279px;top:614px;width:14px;height:9px;border:1px solid #adadad;box-sizing:border-box;background:#e5e5e5"></div>
<div style="left:285px;top:607px;width:1px;height:1px;background:#000"></div>
<div style="left:284px;top:608px;width:3px;height:1px;background:#000"></div>
<div style="left:283px;top:609px;width:5px;height:1px;background:#000"></div>
<div style="left:283px;top:617px;width:5px;height:1px;background:#000"></div>
<div style="left:284px;top:618px;width:3px;height:1px;background:#000"></div>
<div style="left:285px;top:619px;width:1px;height:1px;background:#000"></div>
<span class="t" style="left:249px;top:606px;font-size:12px;color:#000;">0</span>
<span class="t" style="left:32.90px;top:634px;font-size:12px;color:#000;transform:scaleX(0.9979);transform-origin:0 0;">Correction divider</span>
<div style="left:137px;top:630px;width:40px;height:23px;background:#fff"></div>
<div style="left:137px;top:630px;width:23px;height:23px;border:1px solid #7a7a7a;border-right:none;box-sizing:border-box"></div>
<div style="left:160px;top:630px;width:17px;height:23px;border:1px solid #b6babf;border-left:none;box-sizing:border-box;background:#fff"></div>
<div style="left:161px;top:632px;width:14px;height:9px;border:1px solid #adadad;box-sizing:border-box;background:#e5e5e5"></div>
<div style="left:161px;top:642px;width:14px;height:9px;border:1px solid #adadad;box-sizing:border-box;background:#e5e5e5"></div>
<div style="left:167px;top:635px;width:1px;height:1px;background:#000"></div>
<div style="left:166px;top:636px;width:3px;height:1px;background:#000"></div>
<div style="left:165px;top:637px;width:5px;height:1px;background:#000"></div>
<div style="left:165px;top:645px;width:5px;height:1px;background:#000"></div>
<div style="left:166px;top:646px;width:3px;height:1px;background:#000"></div>
<div style="left:167px;top:647px;width:1px;height:1px;background:#000"></div>
<span class="t" style="left:143px;top:634px;font-size:12px;color:#000;">10</span>
<div style="left:29px;top:668px;width:13px;height:13px;background:#fff;border:1px solid #333;box-sizing:border-box"></div>
<svg style="left:29px;top:668px" width="13" height="13"><polyline points="2,6.2 4.8,9.3 10.8,3.3" fill="none" stroke="#333" stroke-width="1.3"/></svg>
<span class="t" style="left:44.30px;top:668px;font-size:12px;color:#000;transform:scaleX(0.9984);transform-origin:0 0;">Lastreglung</span>
<span class="t" style="left:119.50px;top:667px;font-size:12px;color:#000;transform:scaleX(1.0024);transform-origin:0 0;">Intervall</span>
<div style="left:167px;top:663px;width:40px;height:23px;background:#f0f0f0"></div>
<div style="left:167px;top:663px;width:23px;height:23px;border:1px solid #cccccc;border-right:none;box-sizing:border-box"></div>
<div style="left:168px;top:664px;width:22px;height:21px;border:1px solid #fff;border-right:none;border-bottom:none;box-sizing:border-box"></div>
<div style="left:190px;top:663px;width:17px;height:23px;border:1px solid #c3c7cd;border-left:none;box-sizing:border-box;background:#f0f0f0"></div>
<div style="left:191px;top:665px;width:14px;height:9px;border:1px solid #e0e0e0;box-sizing:border-box;background:#f0f0f0"></div>
<div style="left:191px;top:675px;width:14px;height:9px;border:1px solid #e0e0e0;box-sizing:border-box;background:#f0f0f0"></div>
<div style="left:197px;top:668px;width:1px;height:1px;background:#838383"></div>
<div style="left:196px;top:669px;width:3px;height:1px;background:#838383"></div>
<div style="left:195px;top:670px;width:5px;height:1px;background:#838383"></div>
<div style="left:195px;top:678px;width:5px;height:1px;background:#838383"></div>
<div style="left:196px;top:679px;width:3px;height:1px;background:#838383"></div>
<div style="left:197px;top:680px;width:1px;height:1px;background:#838383"></div>
<span class="t" style="left:173px;top:667px;font-size:12px;color:#6d6d6d;">4</span>
<span class="t" style="left:207.40px;top:667px;font-size:12px;color:#000;transform:scaleX(0.9422);transform-origin:0 0;">x 100ms</span>
<div style="left:315px;top:466px;width:231px;height:229px;border:1px solid #dcdcdc;box-sizing:border-box"></div>
<div style="left:322px;top:460px;width:89px;height:13px;background:#fff"></div>
<span class="t" style="left:323.10px;top:460px;font-size:12px;color:#000;transform:scaleX(1.0036);transform-origin:0 0;">Beschleunigung</span>
<div style="left:325px;top:483px;width:13px;height:13px;background:#fff;border:1px solid #333;box-sizing:border-box"></div>
<span class="t" style="left:340.52px;top:482px;font-size:12px;color:#000;transform:scaleX(0.9791);transform-origin:0 0;">Beschleunigung anpassen</span>
<span class="t" style="left:388.75px;top:505px;font-size:12px;color:#000;transform:scaleX(0.9510);transform-origin:0 0;">Max. Last</span>
<div style="left:444px;top:501px;width:64px;height:23px;background:#fff"></div>
<div style="left:444px;top:501px;width:47px;height:23px;border:1px solid #7a7a7a;border-right:none;box-sizing:border-box"></div>
<div style="left:491px;top:501px;width:17px;height:23px;border:1px solid #b6babf;border-left:none;box-sizing:border-box;background:#fff"></div>
<div style="left:492px;top:503px;width:14px;height:9px;border:1px solid #adadad;box-sizing:border-box;background:#e5e5e5"></div>
<div style="left:492px;top:513px;width:14px;height:9px;border:1px solid #adadad;box-sizing:border-box;background:#e5e5e5"></div>
<div style="left:498px;top:506px;width:1px;height:1px;background:#000"></div>
<div style="left:497px;top:507px;width:3px;height:1px;background:#000"></div>
<div style="left:496px;top:508px;width:5px;height:1px;background:#000"></div>
<div style="left:496px;top:516px;width:5px;height:1px;background:#000"></div>
<div style="left:497px;top:517px;width:3px;height:1px;background:#000"></div>
<div style="left:498px;top:518px;width:1px;height:1px;background:#000"></div>
<span class="t" style="left:450px;top:505px;font-size:12px;color:#000;">0</span>
<span class="t" style="left:326.29px;top:533px;font-size:12px;color:#000;transform:scaleX(1.0127);transform-origin:0 0;">Min. Beschleunigung</span>
<div style="left:444px;top:529px;width:46px;height:23px;background:#fff"></div>
<div style="left:444px;top:529px;width:29px;height:23px;border:1px solid #7a7a7a;border-right:none;box-sizing:border-box"></div>
<div style="left:473px;top:529px;width:17px;height:23px;border:1px solid #b6babf;border-left:none;box-sizing:border-box;background:#fff"></div>
<div style="left:474px;top:531px;width:14px;height:9px;border:1px solid #adadad;box-sizing:border-box;background:#e5e5e5"></div>
<div style="left:474px;top:541px;width:14px;height:9px;border:1px solid #adadad;box-sizing:border-box;background:#e5e5e5"></div>
<div style="left:480px;top:534px;width:1px;height:1px;background:#000"></div>
<div style="left:479px;top:535px;width:3px;height:1px;background:#000"></div>
<div style="left:478px;top:536px;width:5px;height:1px;background:#000"></div>
<div style="left:478px;top:544px;width:5px;height:1px;background:#000"></div>
<div style="left:479px;top:545px;width:3px;height:1px;background:#000"></div>
<div style="left:480px;top:546px;width:1px;height:1px;background:#000"></div>
<span class="t" style="left:450px;top:533px;font-size:12px;color:#000;">0</span>
<span class="t" style="left:324.60px;top:561px;font-size:12px;color:#000;transform:scaleX(1.0009);transform-origin:0 0;">Max. Beschleunigung</span>
<div style="left:444px;top:557px;width:46px;height:23px;background:#fff"></div>
<div style="left:444px;top:557px;width:29px;height:23px;border:1px solid #7a7a7a;border-right:none;box-sizing:border-box"></div>
<div style="left:473px;top:557px;width:17px;height:23px;border:1px solid #b6babf;border-left:none;box-sizing:border-box;background:#fff"></div>
<div style="left:474px;top:559px;width:14px;height:9px;border:1px solid #adadad;box-sizing:border-box;background:#e5e5e5"></div>
<div style="left:474px;top:569px;width:14px;height:9px;border:1px solid #adadad;box-sizing:border-box;background:#e5e5e5"></div>
<div style="left:480px;top:562px;width:1px;height:1px;background:#000"></div>
<div style="left:479px;top:563px;width:3px;height:1px;background:#000"></div>
<div style="left:478px;top:564px;width:5px;height:1px;background:#000"></div>
<div style="left:478px;top:572px;width:5px;height:1px;background:#000"></div>
<div style="left:479px;top:573px;width:3px;height:1px;background:#000"></div>
<div style="left:480px;top:574px;width:1px;height:1px;background:#000"></div>
<span class="t" style="left:450px;top:561px;font-size:12px;color:#000;">0</span>
<span class="t" style="left:412.40px;top:588px;font-size:12px;color:#000;transform:scaleX(0.9000);transform-origin:0 0;">CV#</span>
<div style="left:444px;top:585px;width:51px;height:23px;background:#fff"></div>
<div style="left:444px;top:585px;width:34px;height:23px;border:1px solid #7a7a7a;border-right:none;box-sizing:border-box"></div>
<div style="left:478px;top:585px;width:17px;height:23px;border:1px solid #b6babf;border-left:none;box-sizing:border-box;background:#fff"></div>
<div style="left:479px;top:587px;width:14px;height:9px;border:1px solid #adadad;box-sizing:border-box;background:#e5e5e5"></div>
<div style="left:479px;top:597px;width:14px;height:9px;border:1px solid #adadad;box-sizing:border-box;background:#e5e5e5"></div>
<div style="left:485px;top:590px;width:1px;height:1px;background:#000"></div>
<div style="left:484px;top:591px;width:3px;height:1px;background:#000"></div>
<div style="left:483px;top:592px;width:5px;height:1px;background:#000"></div>
<div style="left:483px;top:600px;width:5px;height:1px;background:#000"></div>
<div style="left:484px;top:601px;width:3px;height:1px;background:#000"></div>
<div style="left:485px;top:602px;width:1px;height:1px;background:#000"></div>
<span class="t" style="left:450px;top:589px;font-size:12px;color:#000;">3</span>
<div style="left:496px;top:585px;width:40px;height:23px;background:#fff"></div>
<div style="left:496px;top:585px;width:23px;height:23px;border:1px solid #7a7a7a;border-right:none;box-sizing:border-box"></div>
<div style="left:519px;top:585px;width:17px;height:23px;border:1px solid #b6babf;border-left:none;box-sizing:border-box;background:#fff"></div>
<div style="left:520px;top:587px;width:14px;height:9px;border:1px solid #adadad;box-sizing:border-box;background:#e5e5e5"></div>
<div style="left:520px;top:597px;width:14px;height:9px;border:1px solid #adadad;box-sizing:border-box;background:#e5e5e5"></div>
<div style="left:526px;top:590px;width:1px;height:1px;background:#000"></div>
<div style="left:525px;top:591px;width:3px;height:1px;background:#000"></div>
<div style="left:524px;top:592px;width:5px;height:1px;background:#000"></div>
<div style="left:524px;top:600px;width:5px;height:1px;background:#000"></div>
<div style="left:525px;top:601px;width:3px;height:1px;background:#000"></div>
<div style="left:526px;top:602px;width:1px;height:1px;background:#000"></div>
<span class="t" style="left:502px;top:589px;font-size:12px;color:#000;">0</span>
<div style="left:7px;top:728px;width:73px;height:21px;background:#e1e1e1;border:1px solid #adadad;box-sizing:border-box"></div>
<div style="left:92px;top:728px;width:73px;height:21px;background:#e1e1e1;border:1px solid #adadad;box-sizing:border-box"></div>
<div style="left:177px;top:728px;width:73px;height:21px;background:#e1e1e1;border:1px solid #adadad;box-sizing:border-box"></div>
<div style="left:262px;top:728px;width:48px;height:21px;background:#e1e1e1;border:1px solid #adadad;box-sizing:border-box"></div>
<div style="left:322px;top:728px;width:48px;height:21px;background:#e1e1e1;border:1px solid #adadad;box-sizing:border-box"></div>
<span class="t" style="left:334.30px;top:732px;font-size:12px;color:#000;transform:scaleX(0.9458);transform-origin:0 0;">ABC</span>
<div style="left:382px;top:728px;width:73px;height:21px;background:#e1e1e1;border:1px solid #adadad;box-sizing:border-box"></div>
<span class="t" style="left:398.13px;top:732px;font-size:12px;color:#000;transform:scaleX(0.9675);transform-origin:0 0;">Senden</span>
<div style="left:486px;top:728px;width:73px;height:21px;background:#e1e1e1;border:1px solid #adadad;box-sizing:border-box"></div>
<span class="t" style="left:514.30px;top:732px;font-size:12px;color:#000;transform:scaleX(0.9235);transform-origin:0 0;">OK</span>
<div style="left:569px;top:728px;width:77px;height:21px;background:#e1e1e1;border:1px solid #adadad;box-sizing:border-box"></div>
<span class="t" style="left:578.30px;top:732px;font-size:12px;color:#000;transform:scaleX(0.9879);transform-origin:0 0;">Abbrechen</span>
<div style="left:656px;top:728px;width:88px;height:21px;background:#e1e1e1;border:1px solid #adadad;box-sizing:border-box"></div>
<span class="t" style="left:664.30px;top:732px;font-size:12px;color:#000;transform:scaleX(1.0029);transform-origin:0 0;">Übernehmen</span>
<div style="left:754px;top:728px;width:73px;height:21px;background:#e1e1e1;border:1px solid #adadad;box-sizing:border-box"></div>
<span class="t" style="left:777.34px;top:732px;font-size:12px;color:#000;transform:scaleX(1.0609);transform-origin:0 0;">Hilfe</span>
<svg style="left:0;top:720px" width="320" height="30" viewBox="0 720 320 30" fill="none" stroke="#000" stroke-width="1.15" stroke-linecap="round" stroke-linejoin="round"><polyline points="45.6,736.2 40.3,738.9 45.6,741.6"/><polyline points="125.4,736.2 130,738.9 125.4,741.6"/><polyline points="209,736.3 204.3,738.9 209,741.5"/><line x1="211.8" y1="743.4" x2="215.2" y2="734.4"/><polyline points="217.6,736.3 222.2,738.9 217.6,741.5"/><line x1="282.6" y1="739.5" x2="288.6" y2="739.5"/><line x1="285.5" y1="736.8" x2="285.5" y2="742.2"/></svg>
<div style="left:832px;top:745px;width:2px;height:2px;background:#b8b8b8"></div>
<div style="left:829px;top:748px;width:2px;height:2px;background:#b8b8b8"></div>
<div style="left:832px;top:748px;width:2px;height:2px;background:#b8b8b8"></div>
<div style="left:826px;top:751px;width:2px;height:2px;background:#b8b8b8"></div>
<div style="left:829px;top:751px;width:2px;height:2px;background:#b8b8b8"></div>
<div style="left:832px;top:751px;width:2px;height:2px;background:#b8b8b8"></div>
</div></body></html>
